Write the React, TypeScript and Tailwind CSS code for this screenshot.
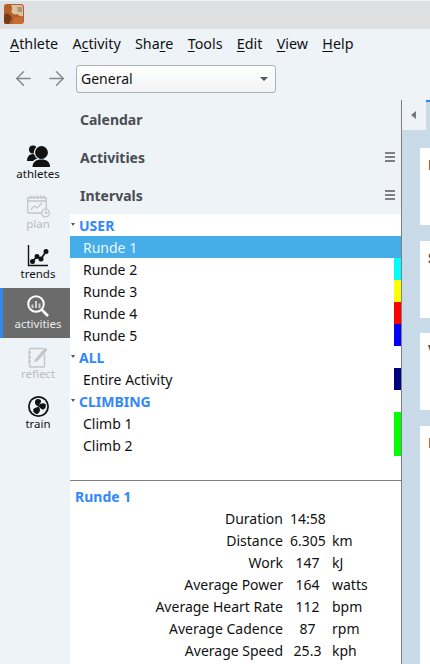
import type { ReactNode } from "react"
import { ArrowLeft, ArrowRight } from "lucide-react"

const font = { fontFamily: '"Noto Sans", sans-serif' }

function Mnemonic({ first, rest, pre }: { first: string; rest: string; pre?: string }) {
  return (
    <span>
      {pre}
      <span className="underline underline-offset-2">{first}</span>
      {rest}
    </span>
  )
}

function AppLogo() {
  return (
    <svg width="20" height="20" viewBox="0 0 20 20">
      <rect width="20" height="20" rx="3" fill="#b5602a" />
      <path d="M7 1h10a2 2 0 0 1 2 2v9c-3 1-4-1-6-2-2 1-5 0-6-3 2-1 1-4 0-6z" fill="#dcc3a0" />
      <path d="M13 3h5v5h-4z" fill="#a9977c" />
      <path d="M0 11c3-3 6-1 8 3l-3 6H2a2 2 0 0 1-2-2z" fill="#7a3a18" />
      <path d="M10 14l9-1v5a2 2 0 0 1-2 2h-8z" fill="#c96d2e" />
    </svg>
  )
}

function AthletesIcon() {
  return (
    <svg width="23" height="23" viewBox="0 0 23 23" fill="#111">
      <circle cx="6" cy="4.500" r="4" />
      <path d="M0 16c0-4 2-7 6-7s6 3 6 7z" />
      <circle cx="14.500" cy="7.500" r="7.600" fill="#eef3f8" />
      <path d="M3 23c0-6 5-10 11.500-10S23 17 23 23z" fill="#eef3f8" />
      <circle cx="14.500" cy="7.500" r="6.400" />
      <path d="M5.500 22c0-5 3.500-7.500 9-7.500s8.500 2.500 8.500 7.500z" />
    </svg>
  )
}

function PlanIcon() {
  return (
    <svg width="23" height="23" viewBox="0 0 23 23" fill="none" stroke="#c4c6c8" strokeWidth="1.300">
      <rect x="0.700" y="2.500" width="18.500" height="15.500" rx="1" />
      <path d="M1 6h18M3.500 0.500v3.500M7 0.500v3.500M10.500 0.500v3.500M14 0.500v3.500M17 0.500v3.500" />
      <path d="M3.500 15l4-4 2.500 2 5-5" />
      <circle cx="18.500" cy="18" r="3.800" fill="#eef3f8" />
      <path d="M18.500 16v2h2" />
    </svg>
  )
}

function TrendsIcon() {
  return (
    <svg width="22" height="22" viewBox="0 0 22 22" fill="none" stroke="#111" strokeWidth="1.400">
      <path d="M1.500 0v20.500H21" />
      <path d="M5.500 16.500l4.500-5 4 2.500 5-7.500" strokeWidth="1.700" />
      <circle cx="5.500" cy="16.500" r="1.800" fill="#111" />
      <circle cx="10" cy="11.500" r="1.800" fill="#111" />
      <circle cx="14" cy="14" r="1.800" fill="#111" />
      <circle cx="19" cy="6.500" r="1.800" fill="#111" />
    </svg>
  )
}

function ActivitiesIcon() {
  return (
    <svg width="22" height="22" viewBox="0 0 22 22" fill="none" stroke="#fff" strokeWidth="2">
      <circle cx="9" cy="9" r="7.800" />
      <path d="M14.500 14.500l6.500 6.500" strokeWidth="2.600" />
      <path d="M5.500 9.500v3.500M9 6v7M12.500 8.500v4.500" strokeWidth="2" stroke="#cfcfcf" />
    </svg>
  )
}

function ReflectIcon() {
  return (
    <svg width="23" height="23" viewBox="0 0 23 23" fill="none" stroke="#c4c6c8" strokeWidth="1.400">
      <rect x="2.500" y="3.500" width="15" height="18.500" rx="1" />
      <path d="M1 7.500h3M1 12h3M1 16.500h3" />
      <path d="M8 14l-1.500 4 4-1.500L21 5l-3-3z" fill="#c4c6c8" stroke="#eef3f8" strokeWidth="0.800" />
    </svg>
  )
}

function TrainIcon() {
  return (
    <svg width="21" height="21" viewBox="0 0 21 21">
      <circle cx="10.500" cy="10.500" r="10.500" fill="#111" />
      <circle cx="10.500" cy="10.500" r="8.700" fill="#eef3f8" />
      <path d="M10.500 10.500C7 9.500 6 6 8 3.500c2.500-1.500 5.500 0 5 2.500-.5 1.500-2 2.500-2.500 4.500z" fill="#111" />
      <path d="M10.500 10.500c1-3 4.500-4 7-2.500 1 3-.5 5.500-3 5.500-1.500 0-2.500-2.500-4-3z" fill="#111" />
      <path d="M10.500 10.500c2.500 2.500 1.500 6-1 7.500-3 0-5-2.500-4-5 .8-1.500 3-1 5-2.500z" fill="#111" />
    </svg>
  )
}

function SideItem({ icon, label, dim, active }: { icon: ReactNode; label: string; dim?: boolean; active?: boolean }) {
  return (
    <div className={active ? "h-[50px] flex flex-col items-center pt-[7px] pl-[3px] bg-[#6b6b6b] border-l-[3px] border-[#2f88f0] text-[#ececec]" : dim ? "h-[50px] flex flex-col items-center pt-[7px] pl-[6px] text-[#b9bcbf]" : "h-[50px] flex flex-col items-center pt-[7px] pl-[6px] text-[#111]"}>
      <div className="h-[22px] flex items-center justify-center">{icon}</div>
      <span className="text-[11.500px] leading-[16px] mt-[-1px]">{label}</span>
    </div>
  )
}

function SectionHeader({ label, menu }: { label: string; menu?: boolean }) {
  return (
    <div className="h-[38px] flex items-center justify-between pl-[10px] pr-[6px]">
      <span className="text-[14px] font-bold text-[#4a4d52]">{label}</span>
      {menu && (
        <div className="flex flex-col gap-[2px]">
          <div className="w-[10px] h-[2px] bg-[#808080]" />
          <div className="w-[10px] h-[2px] bg-[#808080]" />
          <div className="w-[10px] h-[2px] bg-[#808080]" />
        </div>
      )}
    </div>
  )
}

function GroupRow({ label }: { label: string }) {
  return (
    <div className="h-[22px] flex items-center text-[14px] font-bold text-[#3088fb]">
      <div className="w-[9px] pl-px mt-[-2px]">
        <div className="w-0 h-0 border-l-[2.500px] border-r-[2.500px] border-t-[3px] border-l-transparent border-r-transparent border-t-[#555]" />
      </div>
      <span>{label}</span>
    </div>
  )
}

function IntervalRow({ label, color, selected }: { label: string; color?: string; selected?: boolean }) {
  return (
    <div className={selected ? "h-[22px] flex items-center justify-between bg-[#45ade8] text-[#eaf6fd]" : "h-[22px] flex items-center justify-between text-[#111]"}>
      <span className="pl-[13px] text-[14px]">{label}</span>
      {color && <div className="w-[7px] h-[22px]" style={{ backgroundColor: color }} />}
    </div>
  )
}

function SideCard({ letter, className }: { letter: string; className: string }) {
  return (
    <div className={"bg-white pl-[8px] pt-[6px] text-[14px] font-bold text-[#4a4d52] whitespace-nowrap overflow-hidden " + className}>
      {letter}
    </div>
  )
}

const metrics = [
  ["Duration", "14:58", ""],
  ["Distance", "6.305", "km"],
  ["Work", "147", "kJ"],
  ["Average Power", "164", "watts"],
  ["Average Heart Rate", "112", "bpm"],
  ["Average Cadence", "87", "rpm"],
  ["Average Speed", "25.3", "kph"],
]

export default function App() {
  return (
    <div className="w-[430px] h-[664px] overflow-hidden flex flex-col bg-[#eef3f8] text-[#111]" style={font}>
      {/* title bar */}
      <div className="h-[28px] bg-[#dfe0e2] mt-px flex items-center pl-1 pb-[2px]">
        <AppLogo />
      </div>

      {/* menu bar */}
      <div className="h-[29px] flex items-center gap-[14.300px] pl-[10px] text-[14.300px] text-[#111]">
        <Mnemonic first="A" rest="thlete" />
        <Mnemonic pre="A" first="c" rest="tivity" />
        <Mnemonic pre="Sha" first="r" rest="e" />
        <Mnemonic first="T" rest="ools" />
        <Mnemonic first="E" rest="dit" />
        <Mnemonic first="V" rest="iew" />
        <Mnemonic first="H" rest="elp" />
      </div>

      {/* toolbar */}
      <div className="h-[42px] flex items-center pl-[12px] pb-px">
        <ArrowLeft size={23} color="#85888b" strokeWidth={1.500} />
        <ArrowRight size={23} color="#85888b" strokeWidth={1.500} className="ml-[10px]" />
        <div className="ml-[8px] w-[200px] h-[28px] rounded-[3px] border border-[#aeb1b4] bg-gradient-to-b from-white to-[#f1f3f5] flex items-center justify-between pl-[4px] pr-[7px] text-[14px]">
          <span>General</span>
          <div className="w-0 h-0 border-l-[4px] border-r-[4px] border-t-[4px] border-l-transparent border-r-transparent border-t-[#555]" />
        </div>
      </div>

      <div className="flex-1 flex min-h-0">
        {/* sidebar */}
        <div className="w-[70px] shrink-0 flex flex-col pt-[38px]">
          <SideItem icon={<AthletesIcon />} label="athletes" />
          <SideItem icon={<PlanIcon />} label="plan" dim />
          <SideItem icon={<TrendsIcon />} label="trends" />
          <SideItem icon={<ActivitiesIcon />} label="activities" active />
          <SideItem icon={<ReflectIcon />} label="reflect" dim />
          <SideItem icon={<TrainIcon />} label="train" />
        </div>

        {/* intervals column */}
        <div className="w-[332px] shrink-0 flex flex-col border-r border-[#7f7f7f]">
          <SectionHeader label="Calendar" />
          <SectionHeader label="Activities" menu />
          <SectionHeader label="Intervals" menu />
          <div className="flex-1 bg-white flex flex-col min-h-0">
            <div className="h-[266px] shrink-0 border-b border-[#7f7f7f] box-content">
              <GroupRow label="USER" />
              <IntervalRow label="Runde 1" selected />
              <IntervalRow label="Runde 2" color="#00ffff" />
              <IntervalRow label="Runde 3" color="#ffff00" />
              <IntervalRow label="Runde 4" color="#ff0000" />
              <IntervalRow label="Runde 5" color="#0000ff" />
              <GroupRow label="ALL" />
              <IntervalRow label="Entire Activity" color="#000080" />
              <GroupRow label="CLIMBING" />
              <IntervalRow label="Climb 1" color="#00ff00" />
              <IntervalRow label="Climb 2" color="#00ff00" />
            </div>
            <div className="pl-[5px] pt-[5px] h-[27px] text-[14px] font-bold text-[#3088fb] leading-[22px]">Runde 1</div>
            <div className="grid grid-cols-[213px_35px_auto] gap-x-[7px] text-[14px] leading-[22px] text-[#111]">
              {metrics.map(([name, value, unit]) => (
                <div key={name} className="contents">
                  <span className="text-right whitespace-nowrap">{name}</span>
                  <span className="text-center whitespace-nowrap">{value}</span>
                  <span>{unit}</span>
                </div>
              ))}
            </div>
          </div>
        </div>

        {/* overview panel, cut off by the window */}
        <div className="flex-1 min-w-0 flex flex-col bg-[#c9dae9] overflow-hidden">
          <div className="h-[30px] shrink-0 flex">
            <div className="w-[24px] bg-[#eef3f8] flex items-center justify-center pr-[1px]">
              <div className="w-0 h-0 border-y-[4px] border-r-[5px] border-y-transparent border-r-[#777]" />
            </div>
            <div className="flex-1 h-[2px] bg-[#2f88f0]" />
          </div>
          <div className="pl-[18px] pt-[18px] flex flex-col flex-1 min-h-0">
            <SideCard letter="D" className="h-[77px] shrink-0" />
            <SideCard letter="S" className="h-[77px] shrink-0 mt-[16px]" />
            <SideCard letter="V" className="h-[77px] shrink-0 mt-[15px]" />
            <SideCard letter="N" className="flex-1 mt-[16px]" />
          </div>
        </div>
      </div>
    </div>
  )
}
